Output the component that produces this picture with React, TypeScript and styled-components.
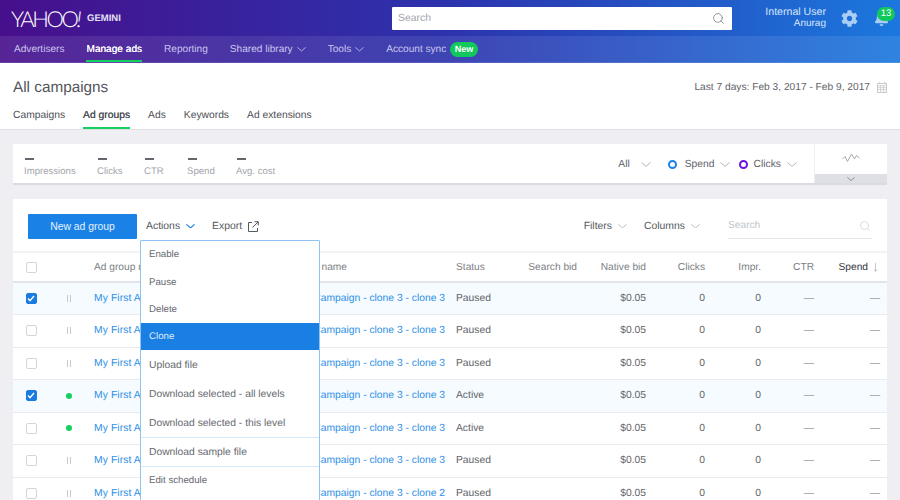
import * as React from 'react';
import styled, { createGlobalStyle } from 'styled-components';
import { Search } from 'lucide-react';
import { FaBell, FaCog } from 'react-icons/fa';

const GlobalStyle = createGlobalStyle`
  html, body {
    margin: 0;
    height: 500px;
    overflow: hidden;
    background: #eeeef3;
    font-family: "Liberation Sans", Arial, sans-serif;
    text-rendering: geometricPrecision;
    -webkit-font-smoothing: antialiased;
  }
  * { box-sizing: border-box; }
`;

const Page = styled.div`
  width: 900px;
  height: 500px;
  overflow: hidden;
  position: relative;
`;

// HEADER
const Header = styled.header`
  background: linear-gradient(90deg, #470f8c 0%, #2c33ad 50%, #1b78de 100%);
`;

const TopBar = styled.div`
  height: 36px;
  display: flex;
  align-items: center;
  padding-left: 11px;
`;

const Logo = styled.div`
  width: 70px;
  font-family: Lato, "Liberation Sans", sans-serif;
  font-weight: 300;
  font-size: 22px;
  letter-spacing: -2.4px;
  color: #fff;
  white-space: nowrap;
  em { font-style: italic; }
`;

const Product = styled.div`
  margin-left: 6px;
  width: 34px;
  font-size: 9.5px;
  font-weight: bold;
  color: #e4e0f4;
`;

const TopSearch = styled.div`
  margin-left: 271px;
  width: 340px;
  height: 23px;
  background: #fff;
  border-radius: 1px;
  display: flex;
  align-items: center;
  justify-content: space-between;
  padding: 0 7px 0 6px;
  font-size: 10.4px;
  color: #a2a4aa;
  svg { color: #6b6f76; }
`;

const UserBox = styled.div`
  margin-left: 32px;
  width: 62px;
  text-align: right;
  white-space: nowrap;
  color: #d8e6fb;
  font-size: 10.6px;
  line-height: 12px;
  small { display: block; font-size: 10px; }
`;

const Gear = styled.div`
  margin-left: 15px;
  display: flex;
  color: #a9cdf5;
  font-size: 17px;
`;

const BellWrap = styled.div`
  position: relative;
  margin-left: 16px;
  display: flex;
  color: #a9cdf5;
  font-size: 15px;
`;

const Count = styled.span`
  position: absolute;
  left: 3px;
  top: -4px;
  width: 18px;
  height: 14px;
  border-radius: 7px;
  background: #12c85c;
  color: #fff;
  font-size: 9.5px;
  line-height: 14px;
  text-align: center;
`;

const NavBar = styled.nav`
  height: 27px;
  padding-left: 14px;
  display: flex;
  gap: 22px;
  background: rgba(255, 255, 255, 0.09);
  border-bottom: 1px solid rgba(255, 255, 255, 0.12);
`;

const NavItem = styled.div<{ $active?: boolean }>`
  position: relative;
  display: flex;
  align-items: center;
  gap: 4px;
  padding-top: 1px;
  font-size: 10.1px;
  color: ${p => (p.$active ? '#fff' : '#c9c6ee')};
  ${p => p.$active && 'text-shadow: 0 0 0.5px #fff;'}
  &::after {
    content: '';
    display: ${p => (p.$active ? 'block' : 'none')};
    position: absolute;
    left: 0;
    right: 0;
    bottom: 0;
    height: 2px;
    background: #12d15f;
  }
`;

const NewBadge = styled.span`
  padding: 0 4.5px;
  height: 15px;
  border-radius: 8px;
  background: #12c85c;
  color: #fff;
  font-size: 9px;
  font-weight: bold;
  line-height: 15px;
`;

// TITLE AREA
const TitleArea = styled.section`
  height: 67px;
  background: #fff;
  border-bottom: 1px solid #dfe0e4;
  padding: 0 13px;
`;

const TitleRow = styled.div`
  height: 45px;
  display: flex;
  align-items: center;
  justify-content: space-between;
  padding-top: 4px;
`;

const Title = styled.h1`
  margin: 0;
  font-size: 15.3px;
  font-weight: 400;
  color: #53565c;
`;

const DateRange = styled.div`
  display: flex;
  align-items: center;
  gap: 7px;
  font-size: 10.2px;
  color: #5f6369;
`;

const Tabs = styled.div`
  display: flex;
  gap: 18px;
`;

const Tab = styled.div<{ $active?: boolean }>`
  height: 21px;
  padding-top: 2px;
  font-size: 10.3px;
  color: #4d5056;
  border-bottom: ${p => (p.$active ? '2px solid #12d15f' : 'none')};
  ${p => p.$active && 'text-shadow: 0 0 0.5px #4d5056;'}
`;

// METRICS
const MetricsCard = styled.section`
  margin: 14px 13px 0;
  height: 41px;
  background: #fff;
  border-bottom: 2px solid #d9dbe2;
  display: flex;
  align-items: stretch;
  padding-left: 11px;
`;

const Metric = styled.div<{ $width: number }>`
  width: ${p => p.$width}px;
  padding-top: 14px;
  font-size: 9.6px;
  color: #a3a6ac;
  i {
    display: block;
    width: 9px;
    height: 2px;
    margin: 0 0 6px 1px;
    background: #63666c;
  }
`;

const Legend = styled.div`
  margin-left: auto;
  display: flex;
  align-items: center;
  height: 39px;
  padding-top: 1px;
  font-size: 10.3px;
  color: #5f6369;
`;

const LegendItem = styled.div<{ $gap: number; $end: number }>`
  display: flex;
  align-items: center;
  gap: ${p => p.$gap}px;
  margin-right: ${p => p.$end}px;
`;

const Dot = styled.span<{ $color: string; $space: number }>`
  width: 9px;
  height: 9px;
  margin-right: ${p => p.$space}px;
  border-radius: 50%;
  border: 2.5px solid ${p => p.$color};
`;

const ChartToggle = styled.div`
  width: 73px;
  display: flex;
  flex-direction: column;
  border-left: 1px solid #eceef1;
`;

const ChartIcon = styled.div`
  flex: 1;
  display: flex;
  align-items: center;
  justify-content: center;
  padding-bottom: 2px;
`;

const ChartFold = styled.div`
  height: 9px;
  background: #dee0e5;
  display: flex;
  align-items: center;
  justify-content: center;
`;

// TABLE CARD
const TableCard = styled.section`
  margin: 14px 13px 0;
  background: #fff;
`;

const Toolbar = styled.div`
  height: 54px;
  padding: 2px 15px 0;
  display: flex;
  align-items: center;
  font-size: 10.4px;
  color: #55585e;
  border-bottom: 2px solid #f2f3f5;
`;

const PrimaryButton = styled.button`
  width: 109px;
  height: 25px;
  padding: 0;
  border: none;
  border-radius: 1px;
  background: #1a82e6;
  color: #e4f1fd;
  font: inherit;
`;

const ToolbarAction = styled.div<{ $left?: number }>`
  display: flex;
  align-items: center;
  gap: 6px;
  margin-left: ${p => p.$left ?? 0}px;
`;

const ToolbarSpacer = styled.div`
  flex: 1;
`;

const TableSearch = styled.div`
  margin-left: 28px;
  width: 144px;
  height: 25px;
  display: flex;
  align-items: center;
  justify-content: space-between;
  padding-right: 1px;
  border-bottom: 1px solid #e5e6ea;
  color: #c3c5cb;
  font-size: 10.2px;
  svg { color: #b8bbc1; }
`;

const gridColumns = '37px 44px 215px 147px 68px 53px 69px 59px 56px 53px 66px 7px';

const HeadRow = styled.div`
  height: 29.5px;
  padding-top: 1px;
  display: grid;
  grid-template-columns: ${gridColumns};
  align-items: center;
  font-size: 10.2px;
  color: #7c7f85;
  border-bottom: 2px solid #e3e4e9;
`;

const Row = styled.div<{ $selected?: boolean }>`
  height: 32.5px;
  display: grid;
  grid-template-columns: ${gridColumns};
  align-items: center;
  font-size: 10.3px;
  color: #5f6369;
  background: ${p => (p.$selected ? '#f5fbff' : '#fff')};
  border-bottom: 1px solid #e8eaee;
`;

const Cell = styled.div<{ $right?: boolean }>`
  text-align: ${p => (p.$right ? 'right' : 'left')};
  white-space: nowrap;
`;

const SpendHead = styled.div`
  display: flex;
  justify-content: flex-end;
  align-items: center;
  gap: 5px;
  padding-right: 2px;
  color: #33363b;
  white-space: nowrap;
`;

const HeadCampaign = styled.div`
  display: flex;
  justify-content: flex-end;
  padding-right: 109px;
  white-space: nowrap;
`;

const CheckCell = styled.div`
  display: flex;
  justify-content: center;
  padding-right: 1px;
`;

const IconCell = styled.div`
  display: flex;
  justify-content: center;
  padding-right: 7px;
`;

const LinkCell = styled.div`
  color: #2d8fe6;
  white-space: nowrap;
`;

const GroupCell = styled(LinkCell)`
  letter-spacing: 0.1px;
`;

const CampaignCell = styled(LinkCell)`
  display: flex;
  justify-content: flex-end;
  padding-right: 11px;
`;

const Dash = styled.span`
  color: #9b9ea4;
`;

const Checkbox = styled.span<{ $checked?: boolean }>`
  width: 11px;
  height: 11px;
  border-radius: 2px;
  border: 1px solid ${p => (p.$checked ? '#1a7be0' : '#d3d5da')};
  background: ${p => (p.$checked ? '#1a7be0' : '#fff')};
  display: flex;
  align-items: center;
  justify-content: center;
`;

const PauseMark = styled.span`
  width: 4px;
  height: 7px;
  border-left: 1px solid #c6c8cd;
  border-right: 1px solid #c6c8cd;
`;

const ActiveMark = styled.span`
  width: 6px;
  height: 6px;
  border-radius: 50%;
  background: #12d15f;
`;

// ACTIONS MENU
const Menu = styled.div`
  position: absolute;
  left: 140px;
  top: 240px;
  width: 180px;
  height: 280px;
  background: #fff;
  border: 1px solid #8fc3f4;
  border-radius: 1px;
  color: #66696f;
`;

const MenuItem = styled.div<{ $h: number; $active?: boolean; $large?: boolean; $line?: boolean }>`
  height: ${p => p.$h}px;
  padding-left: 8px;
  display: flex;
  align-items: center;
  font-size: ${p => (p.$large ? 10.3 : 9.7)}px;
  background: ${p => (p.$active ? '#1a7fe2' : 'transparent')};
  color: ${p => (p.$active ? '#d9ebfc' : 'inherit')};
  border-top: ${p => (p.$line ? '1px solid #d6e9fb' : 'none')};
`;

// ICONS
const Chevron = ({ width = 10, color = '#a9acb2', weight = 0.9 }: { width?: number; color?: string; weight?: number }) => (
  <svg width={width} height={width / 2} viewBox="0 0 10 5" fill="none" stroke={color} strokeWidth={weight}>
    <path d="M0.4 0.4 L5 4.4 L9.6 0.4" />
  </svg>
);

const CheckMark = () => (
  <svg width="8" height="7" viewBox="0 0 8 7">
    <path d="M1 3.6 L3 5.6 L7 1" fill="none" stroke="#fff" strokeWidth="1.4" />
  </svg>
);

const CalendarIcon = () => (
  <svg width="10" height="11" viewBox="0 0 10 11" fill="none" stroke="#c8cacf">
    <rect x="0.5" y="1.5" width="9" height="9" />
    <path d="M0.5 3.7 H9.5 M0.5 5.7 H9.5 M0.5 7.7 H9.5 M3.5 3.7 V10.5 M6.5 3.7 V10.5 M2.5 0 V2 M7.5 0 V2" strokeWidth="0.8" />
  </svg>
);

const ExportIcon = () => (
  <svg width="11" height="11" viewBox="0 0 11 11" fill="none" stroke="#55585e" strokeWidth="1">
    <path d="M4 1.5 H0.5 V10.5 H9.5 V7" />
    <path d="M4.5 6.5 L10 1 M6.5 0.7 H10.3 V4.5" />
  </svg>
);

const PulseIcon = () => (
  <svg width="18" height="10" viewBox="0 0 18 10" fill="none" stroke="#a7aab0" strokeWidth="1">
    <path d="M0.5 6 L3 3.5 L5.5 8.5 L9.5 1 L12.5 6 L14.5 2.5 L17.5 5" />
  </svg>
);

const SortArrow = () => (
  <svg width="5" height="9" viewBox="0 0 5 9" fill="none" stroke="#b5b7bc" strokeWidth="0.8">
    <path d="M2.5 0 V8.3 M0.8 6.6 L2.5 8.4 L4.2 6.6" />
  </svg>
);

const rows = [
  { selected: true, active: false, status: 'Paused', campaign: 'Campaign - clone 3 - clone 3' },
  { selected: false, active: false, status: 'Paused', campaign: 'Campaign - clone 3 - clone 3' },
  { selected: false, active: false, status: 'Paused', campaign: 'Campaign - clone 3 - clone 3' },
  { selected: true, active: true, status: 'Active', campaign: 'Campaign - clone 3 - clone 3' },
  { selected: false, active: true, status: 'Active', campaign: 'Campaign - clone 3 - clone 3' },
  { selected: false, active: false, status: 'Paused', campaign: 'Campaign - clone 3 - clone 3' },
  { selected: false, active: false, status: 'Paused', campaign: 'Campaign - clone 3 - clone 2' },
];

const App = (): React.ReactElement => (
  <Page>
    <GlobalStyle />
    <Header>
      <TopBar>
        <Logo>YAHOO<em>!</em></Logo>
        <Product>GEMINI</Product>
        <TopSearch>
          Search
          <Search size={13} strokeWidth={1.3} />
        </TopSearch>
        <UserBox>
          Internal User
          <small>Anurag</small>
        </UserBox>
        <Gear><FaCog /></Gear>
        <BellWrap>
          <FaBell />
          <Count>13</Count>
        </BellWrap>
      </TopBar>
      <NavBar>
        <NavItem>Advertisers</NavItem>
        <NavItem $active>Manage ads</NavItem>
        <NavItem>Reporting</NavItem>
        <NavItem>Shared library <Chevron width={9} color="#c9c6ee" /></NavItem>
        <NavItem>Tools <Chevron width={9} color="#c9c6ee" /></NavItem>
        <NavItem>Account sync <NewBadge>New</NewBadge></NavItem>
      </NavBar>
    </Header>

    <TitleArea>
      <TitleRow>
        <Title>All campaigns</Title>
        <DateRange>
          Last 7 days: Feb 3, 2017 - Feb 9, 2017
          <CalendarIcon />
        </DateRange>
      </TitleRow>
      <Tabs>
        <Tab>Campaigns</Tab>
        <Tab $active>Ad groups</Tab>
        <Tab>Ads</Tab>
        <Tab>Keywords</Tab>
        <Tab>Ad extensions</Tab>
      </Tabs>
    </TitleArea>

    <MetricsCard>
      <Metric $width={73}><i />Impressions</Metric>
      <Metric $width={47}><i />Clicks</Metric>
      <Metric $width={43}><i />CTR</Metric>
      <Metric $width={49}><i />Spend</Metric>
      <Metric $width={50}><i />Avg. cost</Metric>
      <Legend>
        <LegendItem $gap={11} $end={17}>All <Chevron /></LegendItem>
        <LegendItem $gap={5} $end={9}><Dot $color="#1a82e6" $space={3} />Spend <Chevron /></LegendItem>
        <LegendItem $gap={6} $end={17}><Dot $color="#6a12e6" $space={0} />Clicks <Chevron /></LegendItem>
      </Legend>
      <ChartToggle>
        <ChartIcon><PulseIcon /></ChartIcon>
        <ChartFold><Chevron width={8} color="#6c6f76" /></ChartFold>
      </ChartToggle>
    </MetricsCard>

    <TableCard>
      <Toolbar>
        <PrimaryButton>New ad group</PrimaryButton>
        <ToolbarAction $left={9}>Actions <Chevron width={9} color="#1a82e6" weight={1.2} /></ToolbarAction>
        <ToolbarAction $left={17}>Export <ExportIcon /></ToolbarAction>
        <ToolbarSpacer />
        <ToolbarAction>Filters <Chevron width={9} /></ToolbarAction>
        <ToolbarAction $left={17}>Columns <Chevron width={9} /></ToolbarAction>
        <TableSearch>
          Search
          <Search size={12} strokeWidth={1} />
        </TableSearch>
      </Toolbar>
      <HeadRow>
        <CheckCell><Checkbox /></CheckCell>
        <div />
        <Cell>Ad group name</Cell>
        <HeadCampaign>Campaign name</HeadCampaign>
        <Cell>Status</Cell>
        <Cell $right>Search bid</Cell>
        <Cell $right>Native bid</Cell>
        <Cell $right>Clicks</Cell>
        <Cell $right>Impr.</Cell>
        <Cell $right>CTR</Cell>
        <SpendHead>Spend <SortArrow /></SpendHead>
      </HeadRow>
      {rows.map((row, i) => (
        <Row key={i} $selected={row.selected}>
          <CheckCell>
            <Checkbox $checked={row.selected}>{row.selected && <CheckMark />}</Checkbox>
          </CheckCell>
          <IconCell>{row.active ? <ActiveMark /> : <PauseMark />}</IconCell>
          <GroupCell>My First Ad group</GroupCell>
          <CampaignCell>{row.campaign}</CampaignCell>
          <Cell>{row.status}</Cell>
          <div />
          <Cell $right>$0.05</Cell>
          <Cell $right>0</Cell>
          <Cell $right>0</Cell>
          <Cell $right><Dash>—</Dash></Cell>
          <Cell $right><Dash>—</Dash></Cell>
        </Row>
      ))}
    </TableCard>

    <Menu>
      <MenuItem $h={27}>Enable</MenuItem>
      <MenuItem $h={28}>Pause</MenuItem>
      <MenuItem $h={27}>Delete</MenuItem>
      <MenuItem $h={27} $active>Clone</MenuItem>
      <MenuItem $h={30} $large>Upload file</MenuItem>
      <MenuItem $h={29} $large>Download selected - all levels</MenuItem>
      <MenuItem $h={28} $large>Download selected - this level</MenuItem>
      <MenuItem $h={29} $large $line>Download sample file</MenuItem>
      <MenuItem $h={28} $line>Edit schedule</MenuItem>
    </Menu>
  </Page>
);

export default App;
